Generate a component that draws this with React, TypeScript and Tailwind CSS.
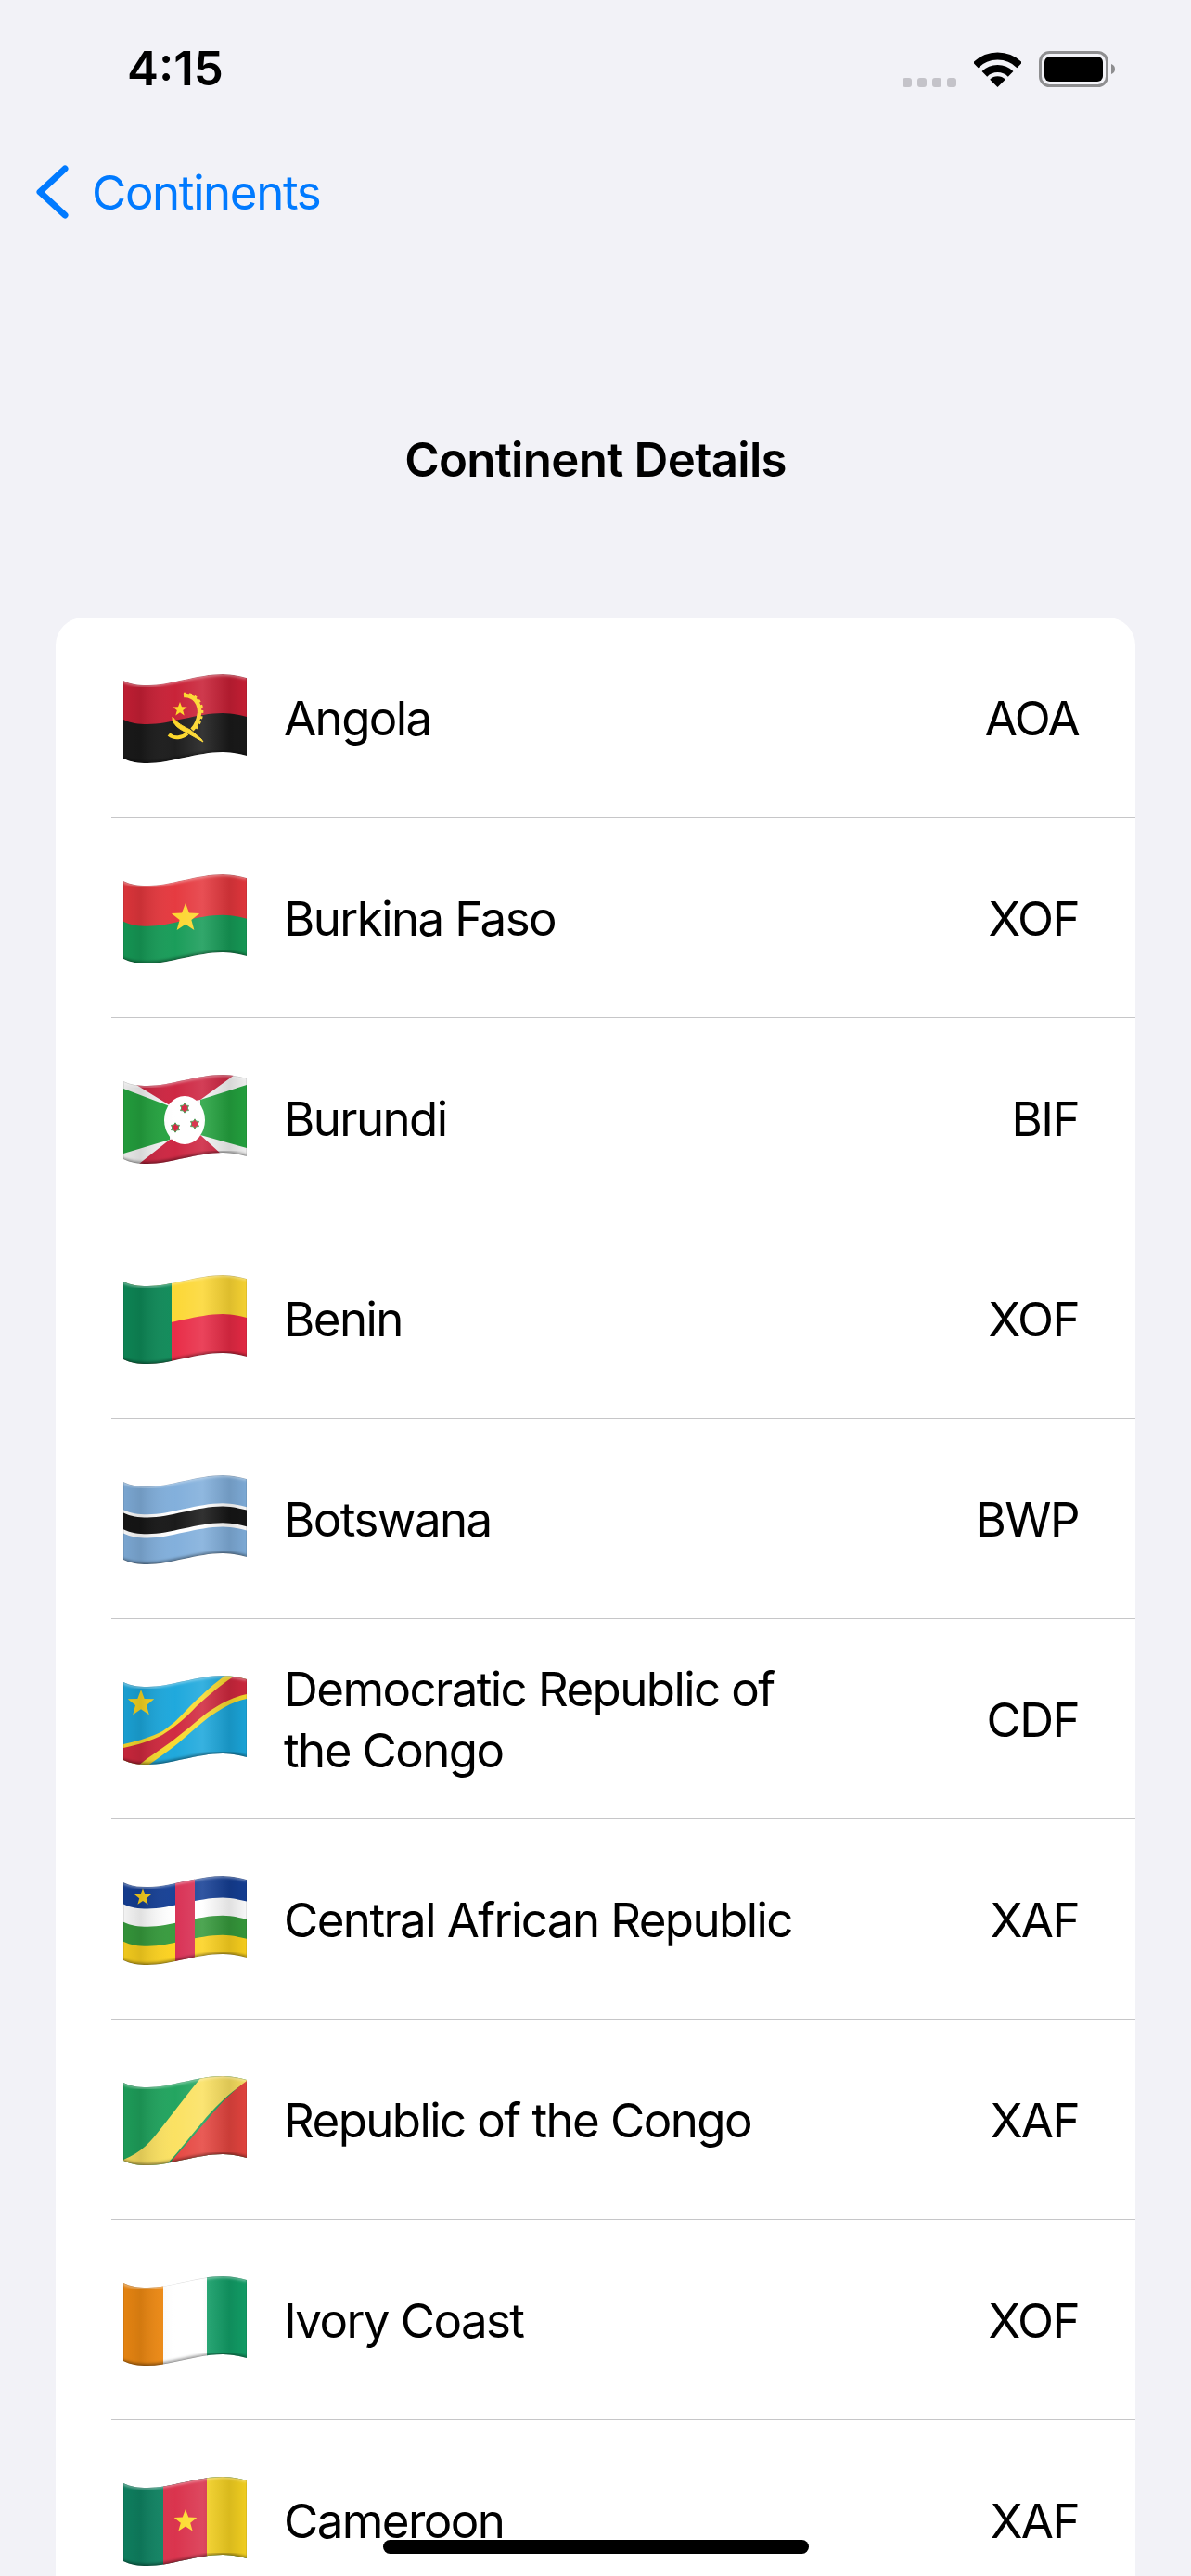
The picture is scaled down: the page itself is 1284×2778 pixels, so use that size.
import type { ReactNode } from "react";

// wavy edge of the flag, o = y at the left end
const waveDown = (o: number) =>
  `C8 ${o + 4}, 16 ${o + 5}, 26 ${o + 5} C50 ${o + 5}, 80 ${o - 7}, 107 ${o - 7} C116 ${o - 7}, 125 ${o - 5}, 133 ${o - 3}`;
const waveBack = (o: number) =>
  `C125 ${o - 5}, 116 ${o - 7}, 107 ${o - 7} C80 ${o - 7}, 50 ${o + 5}, 26 ${o + 5} C16 ${o + 5}, 8 ${o + 4}, 0 ${o}`;
const band = (a: number, b: number) => {
  const t = 7 + a * 84;
  const u = 7 + b * 84;
  return `M0 ${t} ${waveDown(t)} L133 ${u - 3} ${waveBack(u)} Z`;
};

const starPoints = (cx: number, cy: number, r: number, n = 5, inner = 0.42) => {
  const pts: string[] = [];
  for (let i = 0; i < n * 2; i++) {
    const rad = i % 2 === 0 ? r : r * inner;
    const a = ((-90 + (i * 180) / n) * Math.PI) / 180;
    pts.push(`${(cx + rad * Math.cos(a)).toFixed(2)},${(cy + rad * Math.sin(a)).toFixed(2)}`);
  }
  return pts.join(" ");
};

function Flag({ id, children }: { id: string; children: ReactNode }) {
  return (
    <svg viewBox="0 0 133 96" className="w-[133px] h-[96px] shrink-0">
      <defs>
        <clipPath id={`clip-${id}`}>
          <path d={band(0, 1)} />
        </clipPath>
        <linearGradient id={`shade-${id}`} x1="0" y1="0" x2="1" y2="0">
          <stop offset="0" stopColor="#000" stopOpacity="0.05" />
          <stop offset="0.14" stopColor="#000" stopOpacity="0.12" />
          <stop offset="0.42" stopColor="#fff" stopOpacity="0.02" />
          <stop offset="0.64" stopColor="#fff" stopOpacity="0.12" />
          <stop offset="0.86" stopColor="#000" stopOpacity="0.12" />
          <stop offset="1" stopColor="#000" stopOpacity="0.03" />
        </linearGradient>
        <filter id={`blur-${id}`} x="-10%" y="-10%" width="120%" height="120%">
          <feGaussianBlur stdDeviation="1.5" />
        </filter>
      </defs>
      <g clipPath={`url(#clip-${id})`}>
        {children}
        <rect x="0" y="0" width="133" height="96" fill={`url(#shade-${id})`} />
        <path d={`M-2 7 ${waveDown(7)}`} fill="none" stroke="#fff" strokeOpacity="0.45" strokeWidth="3" filter={`url(#blur-${id})`} />
        <path d={`M-2 91 ${waveDown(91)}`} fill="none" stroke="#000" strokeOpacity="0.38" strokeWidth="4" filter={`url(#blur-${id})`} />
        <path d={band(0, 1)} fill="none" stroke="#000" strokeOpacity="0.14" strokeWidth="1.2" />
      </g>
    </svg>
  );
}

const Angola = () => (
  <Flag id="ao">
    <path d={band(0, 0.52)} fill="#c81f35" />
    <path d={band(0.5, 1)} fill="#1a1a1a" />
    <path d="M65 23 C76 22 83 32 82 42 C81 50 78 56 74 60" fill="none" stroke="#fcd626" strokeWidth="4.5" />
    <path d="M65 21 C78 20 86 31 85 42 C84 50 81 56 77 60" fill="none" stroke="#fcd626" strokeWidth="2.5" strokeDasharray="3 3" />
    <polygon points={starPoints(61, 38, 8)} fill="#fcd626" />
    <path d="M53 46 C52 55 62 60 70 64 L86 73 L84 70 L72 60 C64 56 58 53 53 46 Z" fill="#fcd626" stroke="#fcd626" strokeWidth="1" />
    <path d="M49 65 C55 70 63 69 69 64" fill="none" stroke="#fcd626" strokeWidth="4" />
  </Flag>
);

const BurkinaFaso = () => (
  <Flag id="bf">
    <path d={band(0, 0.54)} fill="#e5373d" />
    <path d={band(0.52, 1)} fill="#169b57" />
    <polygon points={starPoints(67, 47, 16)} fill="#fdd62e" />
  </Flag>
);

const Burundi = () => (
  <Flag id="bi">
    <rect width="133" height="96" fill="#f4f4f4" />
    <polygon points="0,15 50,34 50,70 0,85" fill="#24a33f" />
    <polygon points="133,11 83,27 83,65 133,79" fill="#24a33f" />
    <polygon points="14,0 120,0 83,27 66,30 50,33 14,11" fill="#cd2440" />
    <polygon points="17,96 50,70 66,68 83,65 117,96" fill="#cd2440" />
    <ellipse cx="66" cy="49" rx="22" ry="26" fill="#fff" />
    {[
      [66, 36],
      [56, 57],
      [77, 53],
    ].map(([x, y]) => (
      <polygon key={x} points={starPoints(x, y, 5.2, 6, 0.62)} fill="#d6233f" stroke="#3c9a4c" strokeWidth="0.9" />
    ))}
  </Flag>
);

const Benin = () => (
  <Flag id="bj">
    <path d={band(0, 0.52)} fill="#fcd733" />
    <path d={band(0.5, 1)} fill="#e82a45" />
    <rect width="52" height="96" fill="#0e8a58" />
  </Flag>
);

const Botswana = () => (
  <Flag id="bw">
    <path d={band(0, 1)} fill="#80aedb" />
    <path d={band(0.36, 0.66)} fill="#fff" />
    <path d={band(0.4, 0.61)} fill="#161616" />
  </Flag>
);

const Congo = () => (
  <Flag id="cd">
    <rect width="133" height="96" fill="#1ba7dc" />
    <path d="M0 74 C18 70 30 66 42 60 C55 52 65 40 75 30 C88 18 98 8 110 0 L133 0 L133 25 C118 28 105 36 92 45 C80 54 70 64 59 73 C48 82 36 90 25 98 L0 98 Z" fill="#f8d92e" />
    <path d="M0 78 C18 74 30 70 42 64 C55 56 68 45 79 33 C92 21 105 10 120 0 L133 0 L133 20 C115 24 102 32 89 41 C78 50 65 61 52 71 C40 80 28 87 15 98 L0 98 Z" fill="#d0283e" />
    <polygon points={starPoints(19, 30, 15)} fill="#f5d421" />
  </Flag>
);

const CentralAfrica = () => (
  <Flag id="cf">
    <path d={band(0, 0.3)} fill="#153f95" />
    <path d={band(0.28, 0.53)} fill="#fff" />
    <path d={band(0.51, 0.78)} fill="#369a3c" />
    <path d={band(0.76, 1)} fill="#fcd21e" />
    <rect x="56" width="21" height="96" fill="#d82f53" />
    <polygon points={starPoints(21, 23, 9.5)} fill="#fcd21e" />
  </Flag>
);

const RepublicCongo = () => (
  <Flag id="cg">
    <rect width="133" height="96" fill="#1fa35d" />
    <path d="M0 90 C20 82 30 70 40 57 C55 38 70 18 85 0 L133 0 L133 6 C95 30 75 65 46 96 L0 96 Z" fill="#fbe160" />
    <path d="M133 5 C112 20 98 38 87 51 C74 66 62 80 48 96 L133 96 Z" fill="#e6453f" />
  </Flag>
);

const IvoryCoast = () => (
  <Flag id="ci">
    <rect width="133" height="96" fill="#fff" />
    <rect width="43" height="96" fill="#f08a12" />
    <rect x="90" width="43" height="96" fill="#12a068" />
  </Flag>
);

const Cameroon = () => (
  <Flag id="cm">
    <rect width="133" height="96" fill="#0f8463" />
    <rect x="43" width="47" height="96" fill="#d9304a" />
    <rect x="90" width="43" height="96" fill="#f7d321" />
    <polygon points={starPoints(67, 48, 13)} fill="#fcdc2e" />
  </Flag>
);

const countries: { name: string; code: string; Icon: () => ReactNode }[] = [
  { name: "Angola", code: "AOA", Icon: Angola },
  { name: "Burkina Faso", code: "XOF", Icon: BurkinaFaso },
  { name: "Burundi", code: "BIF", Icon: Burundi },
  { name: "Benin", code: "XOF", Icon: Benin },
  { name: "Botswana", code: "BWP", Icon: Botswana },
  { name: "Democratic Republic of the Congo", code: "CDF", Icon: Congo },
  { name: "Central African Republic", code: "XAF", Icon: CentralAfrica },
  { name: "Republic of the Congo", code: "XAF", Icon: RepublicCongo },
  { name: "Ivory Coast", code: "XOF", Icon: IvoryCoast },
  { name: "Cameroon", code: "XAF", Icon: Cameroon },
];

function StatusBar() {
  return (
    <div className="flex h-[146px] items-center justify-between pl-[137px] pr-[82px]">
      <span className="text-[51px] font-semibold leading-none text-black">4:15</span>
      <div className="flex items-end gap-[19px] pt-[2px]">
        <div className="flex gap-[6px]">
          {[0, 1, 2, 3].map((i) => (
            <div key={i} className="h-[10px] w-[10px] rounded-[3px] bg-[#c4c3c9]" />
          ))}
        </div>
        <svg viewBox="0 0 51 38" className="h-[38px] w-[51px]">
          <path d="M1.8 14.3 A33.5 33.5 0 0 1 49.2 14.3" fill="none" stroke="#000" strokeWidth="8" />
          <path d="M11.4 23.9 A20 20 0 0 1 39.6 23.9" fill="none" stroke="#000" strokeWidth="8" />
          <path d="M17.2 29.7 A11.7 11.7 0 0 1 33.8 29.7 L25.5 38 Z" fill="#000" />
        </svg>
        <svg viewBox="0 0 82 39" className="h-[39px] w-[82px]">
          <rect x="1.5" y="1.5" width="72" height="36" rx="10" fill="none" stroke="#8e8e90" strokeWidth="3" />
          <rect x="6" y="6" width="63" height="27" rx="6" fill="#000" />
          <path d="M78 14 C81 15 82 17 82 19.5 C82 22 81 24 78 25 Z" fill="#8e8e90" />
        </svg>
      </div>
    </div>
  );
}

export default function App() {
  return (
    <div
      className="relative h-[2778px] w-[1284px] overflow-hidden bg-[#f2f2f7] text-black"
      style={{ fontFamily: "Inter, 'Noto Sans', sans-serif" }}
    >
      <StatusBar />

      {/* Back button */}
      <div className="flex h-[122px] items-center pl-[38px]">
        <svg viewBox="0 0 36 58" className="h-[58px] w-[36px]">
          <polyline
            points="32,4 5,29 32,54"
            fill="none"
            stroke="#007aff"
            strokeWidth="7"
            strokeLinecap="round"
            strokeLinejoin="round"
          />
        </svg>
        <span className="ml-[25px] text-[51px] leading-none tracking-[-0.027em] text-[#007aff]">Continents</span>
      </div>

      <h1 className="mt-[197px] mb-[139px] h-[62px] text-center text-[51px] font-semibold leading-[62px] tracking-[-0.014em]">
        Continent Details
      </h1>

      {/* List */}
      <div className="mx-[60px] rounded-[30px] bg-white pl-[60px]">
        {countries.map(({ name, code, Icon }) => (
          <div
            key={name}
            className="flex h-[216px] items-center border-b border-[#c6c6c8] pl-[13px] pr-[61px] pt-[3px] text-[51px] leading-[66px] tracking-[-0.031em]"
          >
            <Icon />
            <span className="ml-[40px] w-[590px]">{name}</span>
            <span className="ml-auto">{code}</span>
          </div>
        ))}
      </div>

      {/* Home indicator */}
      <div className="absolute left-[413px] top-[2739px] h-[15px] w-[459px] rounded-full bg-black" />
    </div>
  );
}
